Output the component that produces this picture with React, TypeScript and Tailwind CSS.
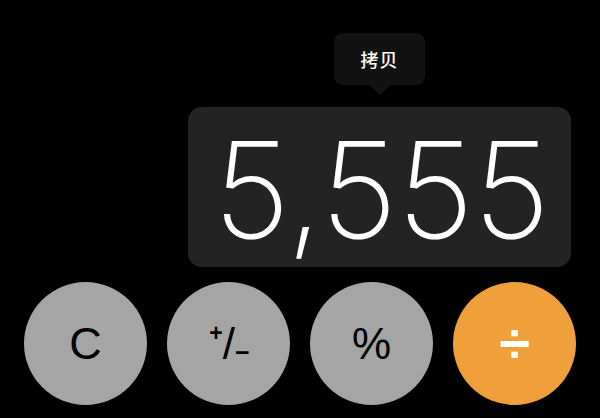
export default function App() {
  const sans = { fontFamily: '"Liberation Sans", "Noto Sans CJK SC", sans-serif' };
  return (
    <div className="h-[418px] w-[600px] overflow-hidden bg-black font-['Liberation_Sans','Noto_Sans_CJK_SC',sans-serif]">
      <div className="flex justify-end pr-[29px] pt-[33px]">
        <div className="flex w-[383px] flex-col items-center">
          {/* copy tooltip */}
          <div className="relative flex h-[52px] w-[91px] items-center justify-center rounded-[9px] bg-[#121212] text-[18px] text-white">
            <span className="font-['Noto_Sans_CJK_SC',sans-serif] font-medium tracking-[1px]">拷贝</span>
            <div className="absolute -bottom-[10px] left-1/2 h-0 w-0 -translate-x-1/2 border-x-[11px] border-t-[10px] border-x-transparent border-t-[#121212]" />
          </div>
          {/* display */}
          <div className="mt-[22px] flex h-[160px] w-full items-center justify-center rounded-[14px] bg-[#232323] pl-[4px] pt-[4px]">
            <span className="font-['Inter',sans-serif] text-[133px] font-extralight leading-none tracking-[-0.5px] text-white">
              5,555
            </span>
          </div>
        </div>
      </div>

      {/* keypad row */}
      <div className="mt-[15px] flex gap-[20px] pl-[24px]" style={sans}>
        <div className="flex h-[123px] w-[123px] items-center justify-center rounded-full bg-[#a5a5a5] text-[45px] text-black">
          C
        </div>
        <div className="flex h-[123px] w-[123px] items-center justify-center rounded-full bg-[#a5a5a5] pl-[2px] text-black">
          <span className="relative -top-[10px] text-[23px] font-bold leading-none">+</span>
          <span className="text-[44px] font-light leading-none">/</span>
          <span className="relative top-[9px] text-[25px] font-bold leading-none">−</span>
        </div>
        <div className="flex h-[123px] w-[123px] items-center justify-center rounded-full bg-[#a5a5a5] text-[44px] text-black">
          %
        </div>
        <div className="flex h-[123px] w-[123px] items-center justify-center rounded-full bg-[#f0a03a] text-[56px] font-bold text-white">
          ÷
        </div>
      </div>
    </div>
  );
}
